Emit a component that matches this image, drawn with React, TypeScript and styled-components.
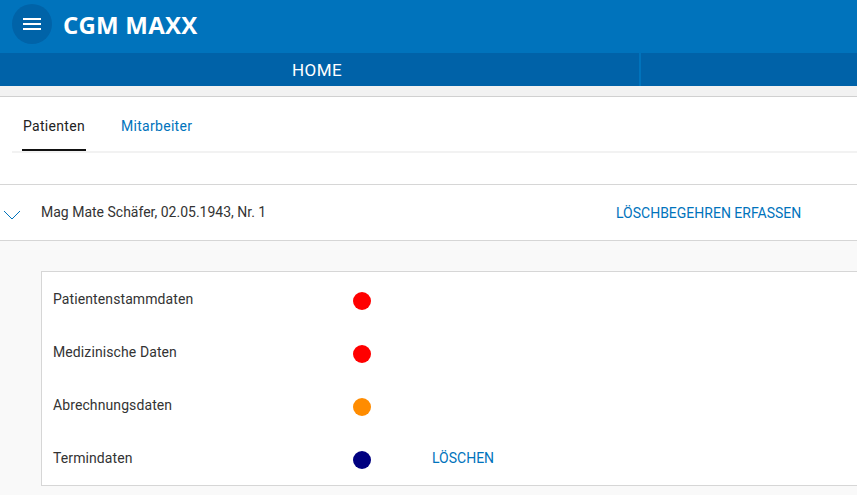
import React from 'react';
import styled, { createGlobalStyle } from 'styled-components';

const GlobalStyle = createGlobalStyle`
  html, body {
    margin: 0;
    padding: 0;
    background: #f9f9f9;
    font-family: Roboto, 'Liberation Sans', sans-serif;
    overflow: hidden;
  }
`;

const Header = styled.header`
  height: 53px;
  background: #0073bc;
  display: flex;
  align-items: center;
  padding-left: 12px;
  gap: 11px;
`;

const MenuButton = styled.button`
  width: 40px;
  height: 40px;
  border-radius: 50%;
  border: none;
  background: #0063a8;
  display: flex;
  align-items: center;
  justify-content: center;
  padding: 0;
  margin-top: -5px;
`;

const Title = styled.h1`
  margin: 0;
  margin-top: -5px;
  color: #fff;
  font-family: 'Open Sans', sans-serif;
  font-weight: 700;
  font-size: 24px;
  letter-spacing: 0.2px;
`;

const Nav = styled.nav`
  height: 33px;
  background: #0062a8;
  display: flex;
`;

const NavItem = styled.div<{ $width?: number }>`
  width: ${p => (p.$width ? `${p.$width}px` : 'auto')};
  flex: ${p => (p.$width ? 'none' : '1')};
  box-sizing: border-box;
  padding-right: ${p => (p.$width ? '5px' : '0')};
  display: flex;
  align-items: center;
  justify-content: center;
  color: #fff;
  font-size: 17px;
  letter-spacing: 0.4px;
`;

const NavDivider = styled.div`
  width: 2px;
  background: #0073bc;
`;

const Band = styled.div`
  height: 10px;
  background: #f2f2f2;
  border-bottom: 1px solid #d0d0d0;
  box-shadow: 0 1px 1px rgba(0, 0, 0, 0.08);
`;

const Content = styled.div`
  background: #fff;
`;

const Tabs = styled.div`
  display: flex;
  margin-left: 12px;
  padding-top: 19px;
  border-bottom: 2px solid #f2f2f2;
  height: 35px;
`;

const Tab = styled.div<{ $active?: boolean }>`
  font-size: 14px;
  letter-spacing: 0.3px;
  color: ${p => (p.$active ? '#222' : '#0073bc')};
  padding: 2px 1px 0;
  margin-left: ${p => (p.$active ? '10px' : '34px')};
  height: 35px;
  box-sizing: border-box;
  border-bottom: ${p => (p.$active ? '2px solid #111' : 'none')};
  margin-bottom: -2px;
`;

const Spacer = styled.div`
  height: 31px;
  border-bottom: 1px solid #d6d6d6;
`;

const PatientRow = styled.div`
  height: 55px;
  display: flex;
  align-items: center;
  border-bottom: 1px solid #d6d6d6;
  font-size: 14px;
  color: #333;
`;

const Chevron = styled.div`
  width: 41px;
  display: flex;
  padding-left: 3px;
  box-sizing: border-box;
  margin-top: 4px;
`;

const PatientName = styled.div`
  width: 575px;
  margin-top: -2px;
`;

const LinkButton = styled.span`
  color: #0073bc;
  font-size: 14px;
  text-transform: uppercase;
`;

const Body = styled.div`
  padding: 30px 0 0 41px;
  background: #f9f9f9;
`;

const Card = styled.div`
  background: #fff;
  border: 1px solid #d6d6d6;
  border-right: none;
  padding: 0 0 1px 11px;
  display: flex;
  flex-direction: column;
`;

const DataRow = styled.div`
  height: 53px;
  display: flex;
  align-items: center;
  font-size: 14px;
  color: #333;
`;

const Label = styled.div`
  width: 300px;
  letter-spacing: 0.1px;
`;

const Dot = styled.span<{ $color: string }>`
  width: 18px;
  height: 18px;
  border-radius: 50%;
  background: ${p => p.$color};
  margin-right: 61px;
  margin-top: 4px;
`;

const rows = [
  { label: 'Patientenstammdaten', color: '#ff0000' },
  { label: 'Medizinische Daten', color: '#ff0000' },
  { label: 'Abrechnungsdaten', color: '#ff8c00' },
  { label: 'Termindaten', color: '#000080', action: 'Löschen' },
];

export default function App() {
  return (
    <>
      <GlobalStyle />
      <Header>
        <MenuButton aria-label="Menü">
          <svg width="18" height="14" viewBox="0 0 18 14">
            <rect x="0" y="1" width="18" height="2" fill="#fff" />
            <rect x="0" y="6" width="18" height="2" fill="#fff" />
            <rect x="0" y="11" width="18" height="2" fill="#fff" />
          </svg>
        </MenuButton>
        <Title>CGM MAXX</Title>
      </Header>
      <Nav>
        <NavItem $width={639}>HOME</NavItem>
        <NavDivider />
        <NavItem />
      </Nav>
      <Band />
      <Content>
        <Tabs>
          <Tab $active>Patienten</Tab>
          <Tab>Mitarbeiter</Tab>
        </Tabs>
        <Spacer />
        <PatientRow>
          <Chevron>
            <svg width="18" height="10" viewBox="0 0 18 10">
              <path d="M1 1 L9 9 L17 1" fill="none" stroke="#0073bc" strokeWidth="1" />
            </svg>
          </Chevron>
          <PatientName>Mag Mate Schäfer, 02.05.1943, Nr. 1</PatientName>
          <LinkButton>Löschbegehren erfassen</LinkButton>
        </PatientRow>
      </Content>
      <Body>
        <Card>
          {rows.map(r => (
            <DataRow key={r.label}>
              <Label>{r.label}</Label>
              <Dot $color={r.color} />
              {r.action && <LinkButton>{r.action}</LinkButton>}
            </DataRow>
          ))}
        </Card>
      </Body>
    </>
  );
}
